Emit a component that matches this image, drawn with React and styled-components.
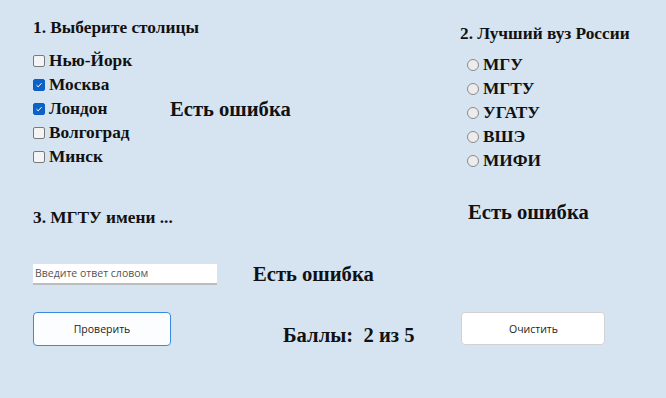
import React from 'react';
import styled, { createGlobalStyle } from 'styled-components';

const GlobalStyle = createGlobalStyle`
    html, body {
        margin: 0;
        padding: 0;
        background: #d6e4f2;
    }
`;

const Window = styled.div`
    width: 666px;
    height: 398px;
    box-sizing: border-box;
    padding-left: 33px;
    background: #d6e4f2;
    font-family: "Liberation Serif", "Times New Roman", serif;
    color: #111;
    overflow: hidden;
`;

const TopSection = styled.div`
    display: flex;
    align-items: flex-start;
`;

const Column = styled.div`
    display: flex;
    flex-direction: column;
    width: ${(p) => p.width || 'auto'};
    padding-top: ${(p) => p.top || 0}px;
`;

const Title = styled.div`
    font-weight: bold;
    font-size: 17.3px;
    line-height: 18px;
    white-space: nowrap;
    margin-top: ${(p) => p.top || 0}px;
`;

const QuestionBody = styled.div`
    display: flex;
    align-items: center;
    margin-top: ${(p) => p.top || 0}px;
`;

const OptionList = styled.div`
    display: flex;
    flex-direction: column;
    width: ${(p) => p.width || 'auto'};
    margin-top: ${(p) => p.top || 0}px;
`;

const Option = styled.label`
    display: flex;
    align-items: center;
    height: 24px;
    font-weight: bold;
    font-size: 17.3px;
    white-space: nowrap;
`;

const CheckBox = styled.span`
    width: 10px;
    height: 10px;
    margin-right: 4px;
    border-radius: 2px;
    border: 1px solid ${(p) => (p.checked ? '#0b5fc4' : '#7a7a7a')};
    background: ${(p) => (p.checked ? '#0b63c9' : '#f4f4f4')};
    display: flex;
    align-items: center;
    justify-content: center;
`;

const Radio = styled.span`
    width: 10px;
    height: 10px;
    margin-left: 7px;
    margin-right: 4px;
    border-radius: 50%;
    border: 1px solid #8a8a8a;
    background: #ececec;
`;

const ErrorText = styled.div`
    font-weight: bold;
    font-size: 20.6px;
    line-height: 22px;
    white-space: nowrap;
    margin-top: ${(p) => p.top || 0}px;
    margin-left: ${(p) => p.left || 0}px;
`;

const InputRow = styled.div`
    display: flex;
    align-items: center;
    gap: 36px;
    margin-top: 36px;
`;

const AnswerInput = styled.input`
    width: 184px;
    height: 21px;
    box-sizing: border-box;
    border: none;
    border-bottom: 2px solid #bdbdbd;
    background: #fff;
    padding: 0 2px;
    font-family: "Open Sans", "Noto Sans", sans-serif;
    font-size: 10.5px;
    outline: none;

    &::placeholder {
        color: #555;
    }
`;

const BottomRow = styled.div`
    display: flex;
    align-items: flex-start;
    margin-top: 27px;
`;

const Button = styled.button`
    width: ${(p) => p.width}px;
    height: ${(p) => p.height}px;
    box-sizing: border-box;
    border-radius: 4px;
    border: ${(p) => (p.primary ? '1.5px solid #3a8be0' : '1px solid #d2d2d2')};
    background: ${(p) => (p.primary ? '#fcfdff' : '#fff')};
    font-family: "Open Sans", "Noto Sans", sans-serif;
    font-size: 10.5px;
    color: #222;
    padding: 0;
`;

const Score = styled.div`
    font-weight: bold;
    font-size: 20.6px;
    line-height: 22px;
    white-space: pre;
    margin-top: 12px;
    margin-left: 112px;
    margin-right: 47px;
`;

const cities = [
    { name: 'Нью-Йорк', checked: false },
    { name: 'Москва', checked: true },
    { name: 'Лондон', checked: true },
    { name: 'Волгоград', checked: false },
    { name: 'Минск', checked: false },
];

const universities = ['МГУ', 'МГТУ', 'УГАТУ', 'ВШЭ', 'МИФИ'];

const Check = () => (
    <svg width='8' height='8' viewBox='0 0 8 8'>
        <path d='M1.5 4.2 L3.2 5.8 L6.5 2.2' fill='none' stroke='#fff' strokeWidth='1' />
    </svg>
);

export default function App() {
    return (
        <>
            <GlobalStyle />
            <Window>
                <TopSection>
                    <Column width='427px' top={19}>
                        <Title>1. Выберите столицы</Title>
                        <QuestionBody top={12}>
                            <OptionList width='137px'>
                                {cities.map((city) => (
                                    <Option key={city.name}>
                                        <CheckBox checked={city.checked}>{city.checked && <Check />}</CheckBox>
                                        {city.name}
                                    </Option>
                                ))}
                            </OptionList>
                            <ErrorText>Есть ошибка</ErrorText>
                        </QuestionBody>
                        <Title top={40}>3. МГТУ имени ...</Title>
                    </Column>
                    <Column top={25}>
                        <Title>2. Лучший вуз России</Title>
                        <OptionList top={10}>
                            {universities.map((name) => (
                                <Option key={name}>
                                    <Radio />
                                    {name}
                                </Option>
                            ))}
                        </OptionList>
                        <ErrorText top={28} left={8}>Есть ошибка</ErrorText>
                    </Column>
                </TopSection>
                <InputRow>
                    <AnswerInput placeholder='Введите ответ словом' />
                    <ErrorText>Есть ошибка</ErrorText>
                </InputRow>
                <BottomRow>
                    <Button primary width={138} height={34}>Проверить</Button>
                    <Score>Баллы:  2 из 5</Score>
                    <Button width={144} height={33}>Очистить</Button>
                </BottomRow>
            </Window>
        </>
    );
}
